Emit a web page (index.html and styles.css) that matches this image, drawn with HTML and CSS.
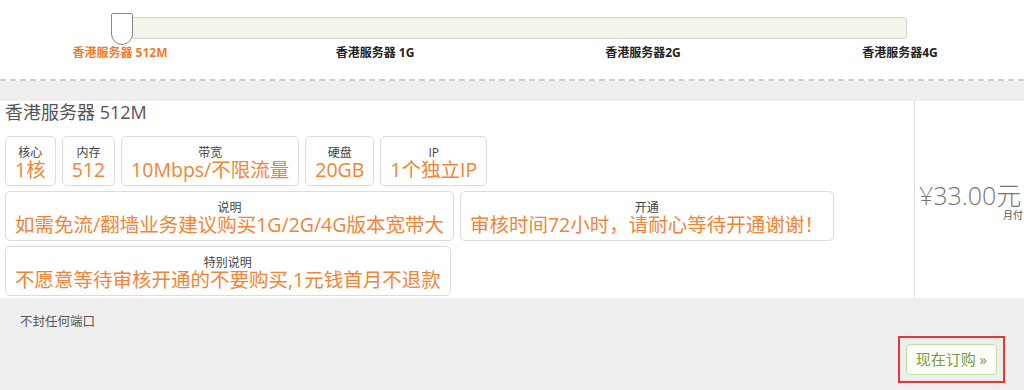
FILE: index.html
```html
<!DOCTYPE html>
<html lang="zh-CN">
<head>
<meta charset="utf-8">
<title>香港服务器</title>
<link rel="stylesheet" href="styles.css">
</head>
<body>
<div class="top">
  <div class="slider">
    <div class="track"></div>
    <div class="handle"></div>
  </div>
  <div class="steps">
    <span class="step active">香港服务器 512M</span>
    <span class="step">香港服务器 1G</span>
    <span class="step">香港服务器2G</span>
    <span class="step">香港服务器4G</span>
  </div>
</div>
<div class="main">
  <div class="panel">
    <div class="info">
      <div class="title">香港服务器 512M</div>
      <div class="row">
        <div class="box"><div class="lab">核心</div><div class="val">1核</div></div>
        <div class="box"><div class="lab">内存</div><div class="val">512</div></div>
        <div class="box"><div class="lab">带宽</div><div class="val">10Mbps/不限流量</div></div>
        <div class="box"><div class="lab">硬盘</div><div class="val">20GB</div></div>
        <div class="box"><div class="lab">IP</div><div class="val">1个独立IP</div></div>
      </div>
      <div class="row">
        <div class="box"><div class="lab">说明</div><div class="val">如需免流/翻墙业务建议购买1G/2G/4G版本宽带大</div></div>
        <div class="box"><div class="lab">开通</div><div class="val">审核时间72小时，请耐心等待开通谢谢！</div></div>
      </div>
      <div class="row">
        <div class="box"><div class="lab">特别说明</div><div class="val">不愿意等待审核开通的不要购买,1元钱首月不退款</div></div>
      </div>
    </div>
    <div class="price">
      <div class="amount">¥33.00元</div>
      <div class="cycle">月付</div>
    </div>
  </div>
  <div class="note">不封任何端口</div>
  <div class="actions">
    <div class="highlight"><a class="buy" href="#">现在订购 »</a></div>
  </div>
</div>
</body>
</html>
```

FILE: styles.css
```css
html, body {
  margin: 0;
  padding: 0;
}
body {
  width: 1024px;
  height: 390px;
  overflow: hidden;
  background: #eeeeee;
  font-family: "Open Sans", "Noto Sans CJK SC", sans-serif;
  color: #555;
}
.top {
  background: #fff;
  height: 79px;
  border-bottom: 2px dashed #cccccc;
}
.slider {
  position: relative;
  height: 45px;
}
.track {
  position: absolute;
  left: 131px;
  top: 17px;
  width: 774px;
  height: 20px;
  background: #f4f4ea;
  border: 1px solid #d6d6cc;
  border-radius: 3px;
}
.handle {
  position: absolute;
  left: 111px;
  top: 13px;
  width: 20px;
  height: 30px;
  background: #fff;
  border: 1px solid #888;
  border-radius: 2px 2px 11px 11px;
}
.steps {
  display: grid;
  grid-template-columns: 240px 270px 266px 248px;
  font-size: 12px;
  font-weight: bold;
  line-height: 16px;
  color: #222;
}
.step {
  justify-self: center;
}
.step.active {
  color: #f07c2a;
}
.main {
  padding-top: 20px;
}
.panel {
  display: flex;
  background: #fff;
  height: 197px;
}
.info {
  width: 914px;
  padding: 0 0 0 5px;
  box-sizing: border-box;
}
.title {
  font-size: 18px;
  line-height: 23px;
  color: #555;
  margin-bottom: 12px;
}
.row {
  display: flex;
  gap: 6px;
  margin-bottom: 5px;
}
.box {
  border: 1px solid #dcdcdc;
  border-radius: 5px;
  height: 48px;
  padding: 0 9px;
  text-align: center;
  box-sizing: content-box;
}
.lab {
  font-size: 12px;
  line-height: 12px;
  margin-top: 10px;
  color: #444;
}
.val {
  font-size: 19.5px;
  line-height: 22px;
  color: #ef8535;
  white-space: nowrap;
}
.price {
  flex: 1;
  min-width: 0;
  overflow: hidden;
  border-left: 1px solid #e2e2e2;
  display: flex;
  flex-direction: column;
  justify-content: center;
  padding: 4px 0 0 4px;
  color: #777;
}
.amount {
  font-size: 25px;
  line-height: 26px;
  white-space: nowrap;
  font-weight: 300;
}
.cycle {
  font-size: 10px;
  line-height: 14px;
  color: #555;
  text-align: right;
  margin-right: 1px;
}
.note {
  font-size: 12.5px;
  line-height: 16px;
  color: #555;
  padding: 16px 0 0 20px;
}
.actions {
  display: flex;
  justify-content: flex-end;
  padding: 6px 19px 0 0;
}
.highlight {
  border: 2px solid #e53935;
  padding: 6px;
}
.buy {
  display: block;
  border: 1px solid #c5dea0;
  border-radius: 4px;
  background: #fcfdf8;
  color: #7a9c3c;
  font-size: 15px;
  line-height: 29px;
  padding: 0 9px;
  text-decoration: none;
}
```
